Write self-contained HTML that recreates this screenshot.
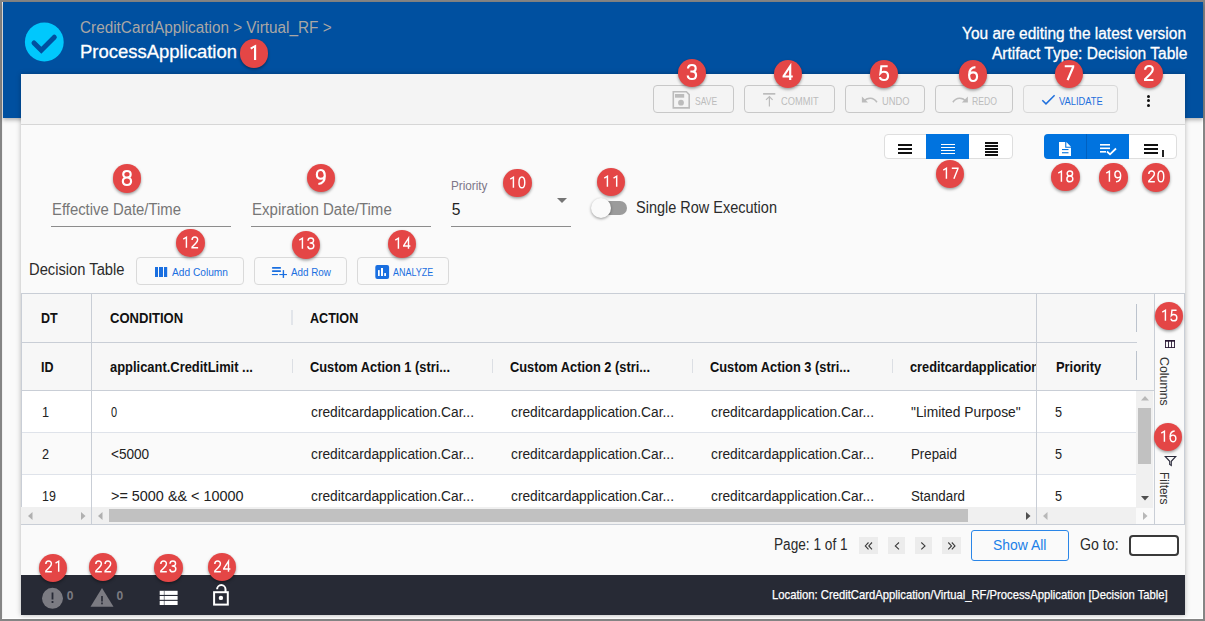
<!DOCTYPE html>
<html><head><meta charset="utf-8">
<style>
*{box-sizing:border-box;margin:0;padding:0}
html,body{width:1205px;height:621px;overflow:hidden;background:#858585;font-family:"Liberation Sans",sans-serif;position:relative}
.a{position:absolute}
.t{position:absolute;white-space:nowrap}
.bd{position:absolute;width:28.2px;height:28.2px;border-radius:50%;background:#e44646;color:#fff;text-align:center;box-shadow:0 1.5px 3px rgba(0,0,0,.38);z-index:50}
</style></head><body>
<div class="a" style="left:2px;top:2px;width:1201px;height:617px;background:#fafafa"></div>
<div class="a" style="left:2px;top:2px;width:1px;height:617px;background:#f2f2f2"></div>
<div class="a" style="left:2px;top:618px;width:1201px;height:1px;background:#fff"></div>
<div class="a" style="left:1202px;top:2px;width:1px;height:617px;background:#fff"></div>
<div class="a" style="left:3px;top:2px;width:1200px;height:116px;background:#0050a0;box-shadow:0 2px 4px rgba(0,0,0,.3)"></div>
<div class="a" style="left:21px;top:74px;width:1164px;height:541px;background:#fafafa;box-shadow:0 0 5px rgba(0,0,0,.28)"></div>
<div class="a" style="left:21px;top:74px;width:1164px;height:51px;background:#f4f4f4;border-bottom:1px solid #d6d6d6"></div>
<div class="a" style="left:21px;top:575px;width:1164px;height:40px;background:#272a35"></div>
<svg class="a" style="left:0;top:0" width="120" height="80"><circle cx="44.3" cy="42" r="19.4" fill="#00c8fd"/><polyline points="34,43 41.3,50.2 54.3,37.2" fill="none" stroke="#0050a0" stroke-width="5" stroke-linecap="round"/></svg>
<div class="t" style="left:80.00px;top:20px;font-size:15.60px;line-height:15.60px;color:#aaa7a5;transform:scaleX(0.9818);transform-origin:0 0;">CreditCardApplication &gt; Virtual_RF &gt;</div>
<div class="t" style="left:80.40px;top:43px;font-size:18.60px;line-height:18.60px;color:#fff;transform:scaleX(0.9926);transform-origin:0 0;-webkit-text-stroke:0.3px #fff">ProcessApplication</div>
<div class="t" style="left:962.40px;top:26px;font-size:15.60px;line-height:15.60px;color:#fff;transform:scaleX(0.9926);transform-origin:0 0;-webkit-text-stroke:0.3px #fff">You are editing the latest version</div>
<div class="t" style="left:991.50px;top:46px;font-size:15.60px;line-height:15.60px;color:#fff;transform:scaleX(0.9961);transform-origin:0 0;-webkit-text-stroke:0.3px #fff">Artifact Type: Decision Table</div>
<div class="bd" style="left:239.5px;top:39.4px"></div>
<svg class="a" style="left:245.58px;top:42.58px;z-index:51" width="15.9" height="20.0"><g transform="translate(3 3) scale(1.240 1.17)" fill="none" stroke="#fff" stroke-width="1.752"><path transform="translate(0.00 0)" d="M1.4 2.3L4.9 0.2V12"/></g></svg>
<div class="a" style="left:653px;top:85px;width:81px;height:28px;border:1px solid #c8c8c8;border-radius:4px"></div>
<div class="a" style="left:744px;top:85px;width:91px;height:28px;border:1px solid #c8c8c8;border-radius:4px"></div>
<div class="a" style="left:845px;top:85px;width:80px;height:28px;border:1px solid #c8c8c8;border-radius:4px"></div>
<div class="a" style="left:935px;top:85px;width:78px;height:28px;border:1px solid #c8c8c8;border-radius:4px"></div>
<div class="a" style="left:1023px;top:85px;width:95px;height:28px;border:1px solid #d8d8d8;border-radius:4px"></div>
<div class="t" style="left:694.80px;top:96px;font-size:11.40px;line-height:11.40px;color:#bcbcbc;transform:scaleX(0.7473);transform-origin:0 0;">SAVE</div>
<div class="t" style="left:780.70px;top:96px;font-size:11.40px;line-height:11.40px;color:#bcbcbc;transform:scaleX(0.8155);transform-origin:0 0;">COMMIT</div>
<div class="t" style="left:881.50px;top:96px;font-size:11.40px;line-height:11.40px;color:#bcbcbc;transform:scaleX(0.8194);transform-origin:0 0;">UNDO</div>
<div class="t" style="left:972.00px;top:96px;font-size:11.40px;line-height:11.40px;color:#bcbcbc;transform:scaleX(0.7591);transform-origin:0 0;">REDO</div>
<div class="t" style="left:1059.30px;top:96px;font-size:11.40px;line-height:11.40px;color:#1e6fdc;transform:scaleX(0.8179);transform-origin:0 0;">VALIDATE</div>
<svg class="a" style="left:672px;top:91px" width="19" height="19"><path d="M1.3 0.8H14.4L17.2 3.6V16.9H1.3Z" fill="none" stroke="#bcbcbc" stroke-width="1.6"/><rect x="3" y="3" width="9.2" height="3.7" fill="#bcbcbc"/><circle cx="9" cy="11.7" r="2.9" fill="#bcbcbc"/></svg>
<svg class="a" style="left:762px;top:91px" width="16" height="18"><rect x="1.1" y="2" width="12.2" height="1.7" fill="#bcbcbc"/><path d="M7.4 5.8V15.6M4 8.9L7.4 5.6L10.6 8.9" fill="none" stroke="#bcbcbc" stroke-width="1.2"/></svg>
<svg class="a" style="left:861px;top:94px" width="18" height="11"><path d="M0.9 2.4V8.5H7Z" fill="#bcbcbc"/><path d="M3 7.3C6 3.2 12.5 2.9 15.9 8.3" fill="none" stroke="#bcbcbc" stroke-width="1.6"/></svg>
<svg class="a" style="left:951px;top:94px" width="18" height="11"><path d="M16.9 2.4V8.5H10.8Z" fill="#bcbcbc"/><path d="M14.8 7.3C11.8 3.2 5.3 2.9 1.9 8.3" fill="none" stroke="#bcbcbc" stroke-width="1.6"/></svg>
<svg class="a" style="left:1041px;top:94px" width="15" height="12"><path d="M1.3 6.2L5 9.9L13.6 1.3" fill="none" stroke="#1e6fdc" stroke-width="1.5"/></svg>
<div class="a" style="left:1147.3px;top:94.7px;width:3px;height:3px;background:#111;border-radius:50%"></div>
<div class="a" style="left:1147.3px;top:99.2px;width:3px;height:3px;background:#111;border-radius:50%"></div>
<div class="a" style="left:1147.3px;top:103.7px;width:3px;height:3px;background:#111;border-radius:50%"></div>
<div class="bd" style="left:677.6px;top:58.9px"></div>
<svg class="a" style="left:683.68px;top:62.08px;z-index:51" width="15.9" height="20.0"><g transform="translate(3 3) scale(1.240 1.17)" fill="none" stroke="#fff" stroke-width="1.752"><path transform="translate(0.00 0)" d="M0.8 3C0.9 1.1 2.3 0 4 0C5.8 0 7 1 7 2.9C7 4.6 5.8 5.6 3.9 5.6H2.7M3.9 5.6C6 5.6 7.3 6.7 7.3 8.7C7.3 10.8 5.9 12 4 12C2.1 12 0.7 10.9 0.6 9"/></g></svg>
<div class="bd" style="left:773.6px;top:59.8px"></div>
<svg class="a" style="left:779.68px;top:62.98px;z-index:51" width="15.9" height="20.0"><g transform="translate(3 3) scale(1.240 1.17)" fill="none" stroke="#fff" stroke-width="1.752"><path transform="translate(0.00 0)" d="M5.8 12V0.2L0.5 8.5V8.9H7.9"/></g></svg>
<div class="bd" style="left:870.3px;top:60.2px"></div>
<svg class="a" style="left:876.38px;top:63.38px;z-index:51" width="15.9" height="20.0"><g transform="translate(3 3) scale(1.240 1.17)" fill="none" stroke="#fff" stroke-width="1.752"><path transform="translate(0.00 0)" d="M7 0.2H1.9L1.2 6.1C1.8 5.4 2.8 5 3.9 5C6 5 7.3 6.4 7.3 8.5C7.3 10.6 6 12 3.9 12C2.2 12 1 11.1 0.7 9.5"/></g></svg>
<div class="bd" style="left:958.7px;top:60.4px"></div>
<svg class="a" style="left:964.78px;top:63.58px;z-index:51" width="15.9" height="20.0"><g transform="translate(3 3) scale(1.240 1.17)" fill="none" stroke="#fff" stroke-width="1.752"><path transform="translate(0.00 0)" d="M6 0.1C3 0.3 0.9 2.5 0.9 6.8C0.9 10 2.2 12 4.1 12C6 12 7.3 10.4 7.3 8.2C7.3 6 6 4.6 4.1 4.6C2.4 4.6 1.1 5.6 0.9 7"/></g></svg>
<div class="bd" style="left:1054.5px;top:59.7px"></div>
<svg class="a" style="left:1060.58px;top:62.88px;z-index:51" width="15.9" height="20.0"><g transform="translate(3 3) scale(1.240 1.17)" fill="none" stroke="#fff" stroke-width="1.752"><path transform="translate(0.00 0)" d="M0.6 0.2H7.4V0.8L2.9 12"/></g></svg>
<div class="bd" style="left:1134.6px;top:59.7px"></div>
<svg class="a" style="left:1140.68px;top:62.88px;z-index:51" width="15.9" height="20.0"><g transform="translate(3 3) scale(1.240 1.17)" fill="none" stroke="#fff" stroke-width="1.752"><path transform="translate(0.00 0)" d="M0.9 3.3C0.9 1.3 2.3 0 4.1 0C5.9 0 7.1 1.2 7.1 3C7.1 4.5 6.3 5.5 5 6.9L0.9 11.2V11.9H7.6"/></g></svg>
<div class="a" style="left:883.5px;top:133.5px;width:129.5px;height:25.5px;background:#fff;border:1px solid #dedede;border-radius:4px"></div>
<div class="a" style="left:926px;top:134px;width:43px;height:24.5px;background:#0073df"></div>
<div class="a" style="left:898px;top:144px;width:14px;height:2px;background:#111"></div>
<div class="a" style="left:898px;top:148px;width:14px;height:2px;background:#111"></div>
<div class="a" style="left:898px;top:152px;width:14px;height:2px;background:#111"></div>
<div class="a" style="left:941px;top:144px;width:14px;height:1.1px;background:#fff"></div>
<div class="a" style="left:941px;top:147px;width:14px;height:1.1px;background:#fff"></div>
<div class="a" style="left:941px;top:150px;width:14px;height:1.1px;background:#fff"></div>
<div class="a" style="left:941px;top:153px;width:14px;height:1.1px;background:#fff"></div>
<div class="a" style="left:984.5px;top:142.3px;width:13px;height:1.6px;background:#111"></div>
<div class="a" style="left:984.5px;top:145.3px;width:13px;height:1.6px;background:#111"></div>
<div class="a" style="left:984.5px;top:148.3px;width:13px;height:1.6px;background:#111"></div>
<div class="a" style="left:984.5px;top:151.3px;width:13px;height:1.6px;background:#111"></div>
<div class="a" style="left:984.5px;top:154.3px;width:13px;height:1.6px;background:#111"></div>
<div class="a" style="left:1044px;top:134px;width:132.5px;height:24.5px;background:#fff;border:1px solid #dedede;border-radius:4px"></div>
<div class="a" style="left:1044px;top:134px;width:85px;height:24.5px;background:#0073df;border-radius:4px 0 0 4px"></div>
<div class="a" style="left:1086px;top:134px;width:1px;height:24.5px;background:#0060c0"></div>
<svg class="a" style="left:1059px;top:142px" width="13" height="15"><path d="M0 0H6.2V5.8H12V14H0Z" fill="#fff"/><path d="M7.3 0L12 4.7H7.3Z" fill="#fff"/><rect x="3" y="7" width="6.5" height="1.1" fill="#0073df"/><rect x="3" y="10.2" width="6.5" height="1.1" fill="#0073df"/></svg>
<svg class="a" style="left:1099px;top:143px" width="19" height="13"><rect x="1" y="1" width="10" height="1.6" fill="#fff"/><rect x="1" y="4.5" width="10" height="1.6" fill="#fff"/><rect x="1" y="8" width="6" height="1.6" fill="#fff"/><path d="M8 8.5L11 11.3L17 5.5" fill="none" stroke="#fff" stroke-width="1.8"/></svg>
<div class="a" style="left:1144px;top:144px;width:13.5px;height:2px;background:#111"></div>
<div class="a" style="left:1144px;top:148px;width:13.5px;height:2px;background:#111"></div>
<div class="a" style="left:1144px;top:152px;width:13.5px;height:2px;background:#111"></div>
<div class="a" style="left:1162.2px;top:150px;width:1.8px;height:4.6px;background:#222"></div>
<div class="a" style="left:1162.2px;top:155.3px;width:1.8px;height:1.4px;background:#222"></div>
<div class="bd" style="left:936.3px;top:159.6px"></div>
<svg class="a" style="left:939.12px;top:164.50px;z-index:51" width="22.5" height="16.8"><g transform="translate(3 3) scale(0.900 0.9)" fill="none" stroke="#fff" stroke-width="1.611"><path transform="translate(0.00 0)" d="M1.4 2.3L4.9 0.2V12"/><path transform="translate(10.30 0)" d="M0.6 0.2H7.4V0.8L2.9 12"/></g></svg>
<div class="bd" style="left:1051.4px;top:163.0px"></div>
<svg class="a" style="left:1054.22px;top:167.90px;z-index:51" width="22.5" height="16.8"><g transform="translate(3 3) scale(0.900 0.9)" fill="none" stroke="#fff" stroke-width="1.611"><path transform="translate(0.00 0)" d="M1.4 2.3L4.9 0.2V12"/><path transform="translate(10.30 0)" d="M4 5.6C2.2 5.6 1 4.5 1 2.8C1 1.1 2.2 0 4 0C5.8 0 7 1.1 7 2.8C7 4.5 5.8 5.6 4 5.6ZM4 5.6C1.9 5.6 0.7 6.8 0.7 8.8C0.7 10.8 2 12 4 12C6 12 7.3 10.8 7.3 8.8C7.3 6.8 6.1 5.6 4 5.6Z"/></g></svg>
<div class="bd" style="left:1099.4px;top:163.4px"></div>
<svg class="a" style="left:1102.22px;top:168.30px;z-index:51" width="22.5" height="16.8"><g transform="translate(3 3) scale(0.900 0.9)" fill="none" stroke="#fff" stroke-width="1.611"><path transform="translate(0.00 0)" d="M1.4 2.3L4.9 0.2V12"/><path transform="translate(10.30 0)" d="M1.9 11.9C5 11.7 7.1 9.5 7.1 5.2C7.1 2 5.8 0 3.9 0C2 0 0.7 1.6 0.7 3.8C0.7 6 2 7.4 3.9 7.4C5.6 7.4 6.9 6.4 7.1 5"/></g></svg>
<div class="bd" style="left:1142.2px;top:163.4px"></div>
<svg class="a" style="left:1145.02px;top:168.30px;z-index:51" width="22.5" height="16.8"><g transform="translate(3 3) scale(0.900 0.9)" fill="none" stroke="#fff" stroke-width="1.611"><path transform="translate(0.00 0)" d="M0.9 3.3C0.9 1.3 2.3 0 4.1 0C5.9 0 7.1 1.2 7.1 3C7.1 4.5 6.3 5.5 5 6.9L0.9 11.2V11.9H7.6"/><path transform="translate(10.30 0)" d="M4 0C1.6 0 0.8 2.6 0.8 6C0.8 9.4 1.6 12 4 12C6.4 12 7.2 9.4 7.2 6C7.2 2.6 6.4 0 4 0Z"/></g></svg>
<div class="t" style="left:52.00px;top:202px;font-size:15.60px;line-height:15.60px;color:#767676;transform:scaleX(0.9538);transform-origin:0 0;">Effective Date/Time</div>
<div class="t" style="left:251.60px;top:202px;font-size:15.60px;line-height:15.60px;color:#767676;transform:scaleX(0.9636);transform-origin:0 0;">Expiration Date/Time</div>
<div class="a" style="left:51px;top:226px;width:180px;height:1px;background:#8c8c8c"></div>
<div class="a" style="left:251px;top:226px;width:180px;height:1px;background:#8c8c8c"></div>
<div class="a" style="left:451px;top:226px;width:120px;height:1px;background:#8c8c8c"></div>
<div class="t" style="left:451.30px;top:180px;font-size:12.40px;line-height:12.40px;color:#7d7688;transform:scaleX(0.9462);transform-origin:0 0;">Priority</div>
<div class="t" style="left:451.80px;top:202px;font-size:15.60px;line-height:15.60px;color:#222;transform:scaleX(1.0000);transform-origin:0 0;">5</div>
<svg class="a" style="left:556px;top:197px" width="12" height="7"><path d="M1 1h10L6 6z" fill="#757575"/></svg>
<div class="a" style="left:598px;top:201px;width:29px;height:14px;background:#9b9b9b;border-radius:7px"></div>
<div class="a" style="left:591px;top:198px;width:20px;height:20px;background:#fafafa;border-radius:50%;box-shadow:0 1px 3px rgba(0,0,0,.4)"></div>
<div class="t" style="left:635.70px;top:200px;font-size:15.60px;line-height:15.60px;color:#2b2b2b;transform:scaleX(0.9291);transform-origin:0 0;">Single Row Execution</div>
<div class="bd" style="left:112.5px;top:164.4px"></div>
<svg class="a" style="left:118.58px;top:167.58px;z-index:51" width="15.9" height="20.0"><g transform="translate(3 3) scale(1.240 1.17)" fill="none" stroke="#fff" stroke-width="1.752"><path transform="translate(0.00 0)" d="M4 5.6C2.2 5.6 1 4.5 1 2.8C1 1.1 2.2 0 4 0C5.8 0 7 1.1 7 2.8C7 4.5 5.8 5.6 4 5.6ZM4 5.6C1.9 5.6 0.7 6.8 0.7 8.8C0.7 10.8 2 12 4 12C6 12 7.3 10.8 7.3 8.8C7.3 6.8 6.1 5.6 4 5.6Z"/></g></svg>
<div class="bd" style="left:307.2px;top:163.7px"></div>
<svg class="a" style="left:313.28px;top:166.88px;z-index:51" width="15.9" height="20.0"><g transform="translate(3 3) scale(1.240 1.17)" fill="none" stroke="#fff" stroke-width="1.752"><path transform="translate(0.00 0)" d="M1.9 11.9C5 11.7 7.1 9.5 7.1 5.2C7.1 2 5.8 0 3.9 0C2 0 0.7 1.6 0.7 3.8C0.7 6 2 7.4 3.9 7.4C5.6 7.4 6.9 6.4 7.1 5"/></g></svg>
<div class="bd" style="left:503.4px;top:168.8px"></div>
<svg class="a" style="left:506.22px;top:173.70px;z-index:51" width="22.5" height="16.8"><g transform="translate(3 3) scale(0.900 0.9)" fill="none" stroke="#fff" stroke-width="1.611"><path transform="translate(0.00 0)" d="M1.4 2.3L4.9 0.2V12"/><path transform="translate(10.30 0)" d="M4 0C1.6 0 0.8 2.6 0.8 6C0.8 9.4 1.6 12 4 12C6.4 12 7.2 9.4 7.2 6C7.2 2.6 6.4 0 4 0Z"/></g></svg>
<div class="bd" style="left:597.3px;top:167.7px"></div>
<svg class="a" style="left:600.12px;top:172.60px;z-index:51" width="22.5" height="16.8"><g transform="translate(3 3) scale(0.900 0.9)" fill="none" stroke="#fff" stroke-width="1.611"><path transform="translate(0.00 0)" d="M1.4 2.3L4.9 0.2V12"/><path transform="translate(10.30 0)" d="M1.4 2.3L4.9 0.2V12"/></g></svg>
<div class="t" style="left:28.50px;top:262px;font-size:15.60px;line-height:15.60px;color:#2b2b2b;transform:scaleX(0.9440);transform-origin:0 0;">Decision Table</div>
<div class="a" style="left:136.4px;top:256.5px;width:107.29999999999998px;height:28px;border:1px solid #dadada;border-radius:4px;background:#fafafa"></div>
<div class="a" style="left:254.3px;top:256.5px;width:92.39999999999998px;height:28px;border:1px solid #dadada;border-radius:4px;background:#fafafa"></div>
<div class="a" style="left:357px;top:256.5px;width:91.69999999999999px;height:28px;border:1px solid #dadada;border-radius:4px;background:#fafafa"></div>
<div class="t" style="left:172.00px;top:266px;font-size:11.60px;line-height:11.60px;color:#1a6fe0;transform:scaleX(0.8773);transform-origin:0 0;">Add Column</div>
<div class="t" style="left:291.00px;top:266px;font-size:11.60px;line-height:11.60px;color:#1a6fe0;transform:scaleX(0.8493);transform-origin:0 0;">Add Row</div>
<div class="t" style="left:393.00px;top:266px;font-size:11.60px;line-height:11.60px;color:#1a6fe0;transform:scaleX(0.7730);transform-origin:0 0;">ANALYZE</div>
<svg class="a" style="left:150px;top:260px" width="150" height="25"><rect x="5" y="7" width="3" height="10" fill="#1a6fe0"/><rect x="9" y="7" width="4" height="10" fill="#1a6fe0"/><rect x="14" y="7" width="3.2" height="10" fill="#1a6fe0"/><rect x="121.9" y="7.1" width="9.2" height="1.7" rx=".8" fill="#1a6fe0"/><rect x="121.9" y="10.3" width="9.2" height="1.7" rx=".8" fill="#1a6fe0"/><rect x="121.9" y="14" width="6" height="1.1" fill="#1a6fe0"/><rect x="129.3" y="14" width="7.7" height="1.1" fill="#1a6fe0"/><rect x="132.7" y="10.1" width="1.4" height="7.8" fill="#1a6fe0"/></svg>
<svg class="a" style="left:370px;top:260px" width="30" height="25"><rect x="5.3" y="5" width="13.8" height="14" rx="2" fill="#1a6fe0"/><rect x="8" y="10.1" width="1.7" height="5.9" fill="#fff"/><rect x="11" y="8" width="2" height="8" fill="#fff"/><rect x="14.2" y="13.1" width="1.8" height="2.9" fill="#fff"/></svg>
<div class="bd" style="left:176.4px;top:228.8px"></div>
<svg class="a" style="left:179.22px;top:233.70px;z-index:51" width="22.5" height="16.8"><g transform="translate(3 3) scale(0.900 0.9)" fill="none" stroke="#fff" stroke-width="1.611"><path transform="translate(0.00 0)" d="M1.4 2.3L4.9 0.2V12"/><path transform="translate(10.30 0)" d="M0.9 3.3C0.9 1.3 2.3 0 4.1 0C5.9 0 7.1 1.2 7.1 3C7.1 4.5 6.3 5.5 5 6.9L0.9 11.2V11.9H7.6"/></g></svg>
<div class="bd" style="left:292.1px;top:230.5px"></div>
<svg class="a" style="left:294.92px;top:235.40px;z-index:51" width="22.5" height="16.8"><g transform="translate(3 3) scale(0.900 0.9)" fill="none" stroke="#fff" stroke-width="1.611"><path transform="translate(0.00 0)" d="M1.4 2.3L4.9 0.2V12"/><path transform="translate(10.30 0)" d="M0.8 3C0.9 1.1 2.3 0 4 0C5.8 0 7 1 7 2.9C7 4.6 5.8 5.6 3.9 5.6H2.7M3.9 5.6C6 5.6 7.3 6.7 7.3 8.7C7.3 10.8 5.9 12 4 12C2.1 12 0.7 10.9 0.6 9"/></g></svg>
<div class="bd" style="left:388.3px;top:229.6px"></div>
<svg class="a" style="left:391.12px;top:234.50px;z-index:51" width="22.5" height="16.8"><g transform="translate(3 3) scale(0.900 0.9)" fill="none" stroke="#fff" stroke-width="1.611"><path transform="translate(0.00 0)" d="M1.4 2.3L4.9 0.2V12"/><path transform="translate(10.30 0)" d="M5.8 12V0.2L0.5 8.5V8.9H7.9"/></g></svg>
<div class="a" style="left:21px;top:293px;width:1132.5px;height:97px;background:#f7f7f7"></div>
<div class="a" style="left:21px;top:390px;width:1115px;height:117px;background:#fff"></div>
<div class="a" style="left:21px;top:432px;width:1115px;height:42px;background:#fafafa"></div>
<div class="a" style="left:21px;top:293px;width:1133px;height:1px;background:#c9ced6"></div>
<div class="a" style="left:21px;top:342px;width:1116px;height:1px;background:#c9ced6"></div>
<div class="a" style="left:21px;top:389.5px;width:1133px;height:1.5px;background:#c9ced6"></div>
<div class="a" style="left:21px;top:432px;width:1115px;height:1px;background:#dfe3ea"></div>
<div class="a" style="left:21px;top:474px;width:1115px;height:1px;background:#dfe3ea"></div>
<div class="a" style="left:91px;top:293px;width:1px;height:231px;background:#c9ced6"></div>
<div class="a" style="left:21px;top:293px;width:1px;height:231px;background:#c9ced6"></div>
<div class="a" style="left:1036px;top:293px;width:1px;height:214px;background:#c9ced6"></div>
<div class="a" style="left:291.5px;top:359px;width:1px;height:14px;background:#dcdfe4"></div>
<div class="a" style="left:491.5px;top:359px;width:1px;height:14px;background:#dcdfe4"></div>
<div class="a" style="left:691.5px;top:359px;width:1px;height:14px;background:#dcdfe4"></div>
<div class="a" style="left:891.5px;top:359px;width:1px;height:14px;background:#dcdfe4"></div>
<div class="a" style="left:291px;top:310px;width:2px;height:15px;background:#e2e5ea"></div>
<div class="a" style="left:1136px;top:304px;width:1px;height:28px;background:#bcc3cd"></div>
<div class="a" style="left:1136px;top:351px;width:1px;height:29px;background:#bcc3cd"></div>
<div class="t" style="left:40.60px;top:311px;font-size:14.20px;line-height:14.20px;color:#111;font-weight:bold;transform:scaleX(0.8800);transform-origin:0 0;">DT</div>
<div class="t" style="left:110.30px;top:311px;font-size:14.20px;line-height:14.20px;color:#111;font-weight:bold;transform:scaleX(0.9187);transform-origin:0 0;">CONDITION</div>
<div class="t" style="left:310.30px;top:311px;font-size:14.20px;line-height:14.20px;color:#111;font-weight:bold;transform:scaleX(0.8874);transform-origin:0 0;">ACTION</div>
<div class="t" style="left:40.60px;top:360px;font-size:14.20px;line-height:14.20px;color:#111;font-weight:bold;transform:scaleX(0.8800);transform-origin:0 0;">ID</div>
<div class="t" style="left:110.30px;top:360px;font-size:14.20px;line-height:14.20px;color:#111;font-weight:bold;transform:scaleX(0.9108);transform-origin:0 0;">applicant.CreditLimit ...</div>
<div class="t" style="left:310.40px;top:360px;font-size:14.20px;line-height:14.20px;color:#111;font-weight:bold;transform:scaleX(0.9045);transform-origin:0 0;">Custom Action 1 (stri...</div>
<div class="t" style="left:510.30px;top:360px;font-size:14.20px;line-height:14.20px;color:#111;font-weight:bold;transform:scaleX(0.9045);transform-origin:0 0;">Custom Action 2 (stri...</div>
<div class="t" style="left:710.30px;top:360px;font-size:14.20px;line-height:14.20px;color:#111;font-weight:bold;transform:scaleX(0.9045);transform-origin:0 0;">Custom Action 3 (stri...</div>
<div class="a" style="left:900px;top:350px;width:136px;height:35px;overflow:hidden"><div class="t" style="left:10.40px;top:10px;font-size:14.20px;line-height:14.20px;color:#111;font-weight:bold;transform:scaleX(0.9000);transform-origin:0 0;">creditcardapplication</div></div>
<div class="t" style="left:1055.50px;top:360px;font-size:14.20px;line-height:14.20px;color:#111;font-weight:bold;transform:scaleX(0.9092);transform-origin:0 0;">Priority</div>
<div class="t" style="left:41.80px;top:406px;font-size:13.80px;line-height:13.80px;color:#222;transform:scaleX(0.9200);transform-origin:0 0;">1</div>
<div class="t" style="left:111.10px;top:406px;font-size:13.80px;line-height:13.80px;color:#222;transform:scaleX(0.7950);transform-origin:0 0;">0</div>
<div class="t" style="left:310.70px;top:406px;font-size:13.80px;line-height:13.80px;color:#222;transform:scaleX(0.9977);transform-origin:0 0;">creditcardapplication.Car...</div>
<div class="t" style="left:510.70px;top:406px;font-size:13.80px;line-height:13.80px;color:#222;transform:scaleX(0.9977);transform-origin:0 0;">creditcardapplication.Car...</div>
<div class="t" style="left:710.70px;top:406px;font-size:13.80px;line-height:13.80px;color:#222;transform:scaleX(0.9977);transform-origin:0 0;">creditcardapplication.Car...</div>
<div class="t" style="left:910.70px;top:406px;font-size:13.80px;line-height:13.80px;color:#222;transform:scaleX(1.0017);transform-origin:0 0;">"Limited Purpose"</div>
<div class="t" style="left:1054.60px;top:406px;font-size:13.80px;line-height:13.80px;color:#222;transform:scaleX(0.9200);transform-origin:0 0;">5</div>
<div class="t" style="left:41.80px;top:448px;font-size:13.80px;line-height:13.80px;color:#222;transform:scaleX(0.9200);transform-origin:0 0;">2</div>
<div class="t" style="left:111.10px;top:448px;font-size:13.80px;line-height:13.80px;color:#222;transform:scaleX(0.9854);transform-origin:0 0;">&lt;5000</div>
<div class="t" style="left:310.70px;top:448px;font-size:13.80px;line-height:13.80px;color:#222;transform:scaleX(0.9977);transform-origin:0 0;">creditcardapplication.Car...</div>
<div class="t" style="left:510.70px;top:448px;font-size:13.80px;line-height:13.80px;color:#222;transform:scaleX(0.9977);transform-origin:0 0;">creditcardapplication.Car...</div>
<div class="t" style="left:710.70px;top:448px;font-size:13.80px;line-height:13.80px;color:#222;transform:scaleX(0.9977);transform-origin:0 0;">creditcardapplication.Car...</div>
<div class="t" style="left:910.70px;top:448px;font-size:13.80px;line-height:13.80px;color:#222;transform:scaleX(0.9628);transform-origin:0 0;">Prepaid</div>
<div class="t" style="left:1054.60px;top:448px;font-size:13.80px;line-height:13.80px;color:#222;transform:scaleX(0.9200);transform-origin:0 0;">5</div>
<div class="t" style="left:41.80px;top:490px;font-size:13.80px;line-height:13.80px;color:#222;transform:scaleX(0.8993);transform-origin:0 0;">19</div>
<div class="t" style="left:111.10px;top:490px;font-size:13.80px;line-height:13.80px;color:#222;transform:scaleX(1.0441);transform-origin:0 0;">&gt;= 5000 &amp;&amp; &lt; 10000</div>
<div class="t" style="left:310.70px;top:490px;font-size:13.80px;line-height:13.80px;color:#222;transform:scaleX(0.9977);transform-origin:0 0;">creditcardapplication.Car...</div>
<div class="t" style="left:510.70px;top:490px;font-size:13.80px;line-height:13.80px;color:#222;transform:scaleX(0.9977);transform-origin:0 0;">creditcardapplication.Car...</div>
<div class="t" style="left:710.70px;top:490px;font-size:13.80px;line-height:13.80px;color:#222;transform:scaleX(0.9977);transform-origin:0 0;">creditcardapplication.Car...</div>
<div class="t" style="left:910.70px;top:490px;font-size:13.80px;line-height:13.80px;color:#222;transform:scaleX(0.9640);transform-origin:0 0;">Standard</div>
<div class="t" style="left:1054.60px;top:490px;font-size:13.80px;line-height:13.80px;color:#222;transform:scaleX(0.9200);transform-origin:0 0;">5</div>
<div class="a" style="left:21px;top:507px;width:1115px;height:17px;background:#f0f0f0"></div>
<div class="a" style="left:21px;top:523.5px;width:1133px;height:1px;background:#c9ced6"></div>
<div class="a" style="left:91px;top:507px;width:1px;height:17px;background:#c9ced6"></div>
<div class="a" style="left:1036px;top:507px;width:1px;height:17px;background:#c9ced6"></div>
<div class="a" style="left:109.3px;top:509.2px;width:858.5px;height:12.6px;background:#c1c1c1"></div>
<svg class="a" style="left:28px;top:511.5px" width="9" height="9"><path d="M4.5 0L0 4L4.5 8z" fill="#b0b0b0"/></svg>
<svg class="a" style="left:81px;top:511.5px" width="9" height="9"><path d="M0 0L4.5 4L0 8z" fill="#b0b0b0"/></svg>
<svg class="a" style="left:98px;top:511.5px" width="9" height="9"><path d="M4.5 0L0 4L4.5 8z" fill="#b0b0b0"/></svg>
<svg class="a" style="left:1026px;top:511.5px" width="9" height="9"><path d="M0 0L4.5 4L0 8z" fill="#505050"/></svg>
<svg class="a" style="left:1042.5px;top:511.5px" width="9" height="9"><path d="M4.5 0L0 4L4.5 8z" fill="#b8b8b8"/></svg>
<svg class="a" style="left:1142.7px;top:511.5px" width="9" height="9"><path d="M0 0L4.5 4L0 8z" fill="#b8b8b8"/></svg>
<div class="a" style="left:1136.3px;top:390.5px;width:17px;height:117px;background:#f0f0f0"></div>
<div class="a" style="left:1138px;top:408px;width:13px;height:56.2px;background:#c1c1c1"></div>
<svg class="a" style="left:1140.5px;top:396px" width="9" height="9"><path d="M0 4.5L4 0L8 4.5z" fill="#b8b8b8"/></svg>
<svg class="a" style="left:1140.8px;top:496px" width="9" height="9"><path d="M0 0L8 0L4 4.5z" fill="#505050"/></svg>
<div class="a" style="left:1153.5px;top:293px;width:31px;height:232px;background:#fafafa;border-left:1px solid #c9ced6;border-right:1px solid #c9ced6;border-bottom:1px solid #c9ced6;border-top:1px solid #c9ced6"></div>
<svg class="a" style="left:1164px;top:339px" width="12" height="11"><g fill="#2a1a35"><rect x="1" y="1" width="10" height="1.7"/><rect x="1" y="8" width="10" height="0.9"/><rect x="1" y="1" width="0.9" height="7.9"/><rect x="4.1" y="1" width="0.9" height="7.9"/><rect x="7" y="1" width="0.9" height="7.9"/><rect x="10.1" y="1" width="0.9" height="7.9"/></g></svg>
<svg class="a" style="left:1164px;top:455px" width="13" height="12"><path d="M1.2 1.5H11.8L7.3 6.3V10.5L5.7 9.5V6.3Z" fill="none" stroke="#2a2a3a" stroke-width="1.1"/></svg>
<div class="t" style="left:1171px;top:356.5px;font-size:13.3px;line-height:13.3px;color:#333;transform:rotate(90deg) scaleX(0.93);transform-origin:0 0">Columns</div>
<div class="t" style="left:1171px;top:472px;font-size:13.3px;line-height:13.3px;color:#333;transform:rotate(90deg) scaleX(0.9);transform-origin:0 0">Filters</div>
<div class="bd" style="left:1155.3px;top:301.6px"></div>
<svg class="a" style="left:1158.12px;top:306.50px;z-index:51" width="22.5" height="16.8"><g transform="translate(3 3) scale(0.900 0.9)" fill="none" stroke="#fff" stroke-width="1.611"><path transform="translate(0.00 0)" d="M1.4 2.3L4.9 0.2V12"/><path transform="translate(10.30 0)" d="M7 0.2H1.9L1.2 6.1C1.8 5.4 2.8 5 3.9 5C6 5 7.3 6.4 7.3 8.5C7.3 10.6 6 12 3.9 12C2.2 12 1 11.1 0.7 9.5"/></g></svg>
<div class="bd" style="left:1154.0px;top:422.7px"></div>
<svg class="a" style="left:1156.82px;top:427.60px;z-index:51" width="22.5" height="16.8"><g transform="translate(3 3) scale(0.900 0.9)" fill="none" stroke="#fff" stroke-width="1.611"><path transform="translate(0.00 0)" d="M1.4 2.3L4.9 0.2V12"/><path transform="translate(10.30 0)" d="M6 0.1C3 0.3 0.9 2.5 0.9 6.8C0.9 10 2.2 12 4.1 12C6 12 7.3 10.4 7.3 8.2C7.3 6 6 4.6 4.1 4.6C2.4 4.6 1.1 5.6 0.9 7"/></g></svg>
<div class="t" style="left:773.60px;top:537px;font-size:15.60px;line-height:15.60px;color:#2a2a2a;transform:scaleX(0.8748);transform-origin:0 0;">Page: 1 of 1</div>
<div class="a" style="left:859px;top:537px;width:19px;height:17px;background:#ececec"></div>
<div class="a" style="left:888px;top:537px;width:17px;height:17px;background:#ececec"></div>
<div class="a" style="left:915px;top:537px;width:17px;height:17px;background:#ececec"></div>
<div class="a" style="left:942px;top:537px;width:19px;height:17px;background:#ececec"></div>
<svg class="a" style="left:855px;top:535px" width="110" height="22"><g fill="none" stroke="#3a3a3a" stroke-width="1.1"><path d="M13.5 7.5L10.3 10.9L13.5 14.3M17 7.5L13.8 10.9L17 14.3"/><path d="M44 7.5L40.3 10.9L44 14.3"/><path d="M66.3 7.5L70 10.9L66.3 14.3"/><path d="M93.3 7.5L96.5 10.9L93.3 14.3M96.8 7.5L100 10.9L96.8 14.3"/></g></svg>
<div class="a" style="left:971.2px;top:530.2px;width:97.6px;height:30.5px;border:1px solid #2a86e8;border-radius:3px;background:#fafafa"></div>
<div class="t" style="left:993.30px;top:537px;font-size:15.40px;line-height:15.40px;color:#2080e8;transform:scaleX(0.9042);transform-origin:0 0;">Show All</div>
<div class="t" style="left:1080.00px;top:537px;font-size:15.60px;line-height:15.60px;color:#2a2a2a;transform:scaleX(0.9084);transform-origin:0 0;">Go to:</div>
<div class="a" style="left:1129.4px;top:534.6px;width:49.2px;height:21px;border:2px solid #3a3a3a;border-radius:4px;background:#fff"></div>
<div class="t" style="left:772.40px;top:589px;font-size:12.40px;line-height:12.40px;color:#fff;transform:scaleX(0.9086);transform-origin:0 0;-webkit-text-stroke:0.25px #fff">Location: CreditCardApplication/Virtual_RF/ProcessApplication [Decision Table]</div>
<svg class="a" style="left:40px;top:582px" width="200" height="28"><circle cx="12.5" cy="16.3" r="10.5" fill="#7b7b82"/><rect x="11.6" y="10.5" width="1.8" height="7" fill="#272a35"/><rect x="11.6" y="19" width="1.8" height="2" fill="#272a35"/><path d="M62 5.9L73.5 24.8H50.5z" fill="#7b7b82"/><rect x="61.2" y="14" width="1.6" height="5.5" fill="#272a35"/><rect x="61.2" y="20.5" width="1.6" height="1.8" fill="#272a35"/><rect x="119.7" y="8.8" width="17.9" height="4.1" fill="#fff"/><rect x="119.7" y="14" width="17.9" height="3.8" fill="#fff"/><rect x="119.7" y="18.9" width="17.9" height="4.1" fill="#fff"/><rect x="123.8" y="8.8" width="0.9" height="14.2" fill="#272a35" opacity=".6"/><rect x="174.1" y="10.2" width="13.7" height="12.4" fill="none" stroke="#fff" stroke-width="2"/><path d="M177.1 7.3A4.2 4.2 0 0 1 185.5 7.3V10" fill="none" stroke="#fff" stroke-width="2"/><circle cx="180.9" cy="15.9" r="2.2" fill="#fff"/></svg>
<div class="t" style="left:66.80px;top:590px;font-size:12.00px;line-height:12.00px;color:#7b7b82;font-weight:bold;transform:scaleX(1.0000);transform-origin:0 0;">0</div>
<div class="t" style="left:116.40px;top:590px;font-size:12.00px;line-height:12.00px;color:#7b7b82;font-weight:bold;transform:scaleX(1.0000);transform-origin:0 0;">0</div>
<div class="bd" style="left:38.9px;top:553.5px"></div>
<svg class="a" style="left:41.72px;top:558.40px;z-index:51" width="22.5" height="16.8"><g transform="translate(3 3) scale(0.900 0.9)" fill="none" stroke="#fff" stroke-width="1.611"><path transform="translate(0.00 0)" d="M0.9 3.3C0.9 1.3 2.3 0 4.1 0C5.9 0 7.1 1.2 7.1 3C7.1 4.5 6.3 5.5 5 6.9L0.9 11.2V11.9H7.6"/><path transform="translate(10.30 0)" d="M1.4 2.3L4.9 0.2V12"/></g></svg>
<div class="bd" style="left:88.9px;top:553.2px"></div>
<svg class="a" style="left:91.72px;top:558.10px;z-index:51" width="22.5" height="16.8"><g transform="translate(3 3) scale(0.900 0.9)" fill="none" stroke="#fff" stroke-width="1.611"><path transform="translate(0.00 0)" d="M0.9 3.3C0.9 1.3 2.3 0 4.1 0C5.9 0 7.1 1.2 7.1 3C7.1 4.5 6.3 5.5 5 6.9L0.9 11.2V11.9H7.6"/><path transform="translate(10.30 0)" d="M0.9 3.3C0.9 1.3 2.3 0 4.1 0C5.9 0 7.1 1.2 7.1 3C7.1 4.5 6.3 5.5 5 6.9L0.9 11.2V11.9H7.6"/></g></svg>
<div class="bd" style="left:154.4px;top:553.5px"></div>
<svg class="a" style="left:157.22px;top:558.40px;z-index:51" width="22.5" height="16.8"><g transform="translate(3 3) scale(0.900 0.9)" fill="none" stroke="#fff" stroke-width="1.611"><path transform="translate(0.00 0)" d="M0.9 3.3C0.9 1.3 2.3 0 4.1 0C5.9 0 7.1 1.2 7.1 3C7.1 4.5 6.3 5.5 5 6.9L0.9 11.2V11.9H7.6"/><path transform="translate(10.30 0)" d="M0.8 3C0.9 1.1 2.3 0 4 0C5.8 0 7 1 7 2.9C7 4.6 5.8 5.6 3.9 5.6H2.7M3.9 5.6C6 5.6 7.3 6.7 7.3 8.7C7.3 10.8 5.9 12 4 12C2.1 12 0.7 10.9 0.6 9"/></g></svg>
<div class="bd" style="left:208.2px;top:553.2px"></div>
<svg class="a" style="left:211.02px;top:558.10px;z-index:51" width="22.5" height="16.8"><g transform="translate(3 3) scale(0.900 0.9)" fill="none" stroke="#fff" stroke-width="1.611"><path transform="translate(0.00 0)" d="M0.9 3.3C0.9 1.3 2.3 0 4.1 0C5.9 0 7.1 1.2 7.1 3C7.1 4.5 6.3 5.5 5 6.9L0.9 11.2V11.9H7.6"/><path transform="translate(10.30 0)" d="M5.8 12V0.2L0.5 8.5V8.9H7.9"/></g></svg>
</body></html>
